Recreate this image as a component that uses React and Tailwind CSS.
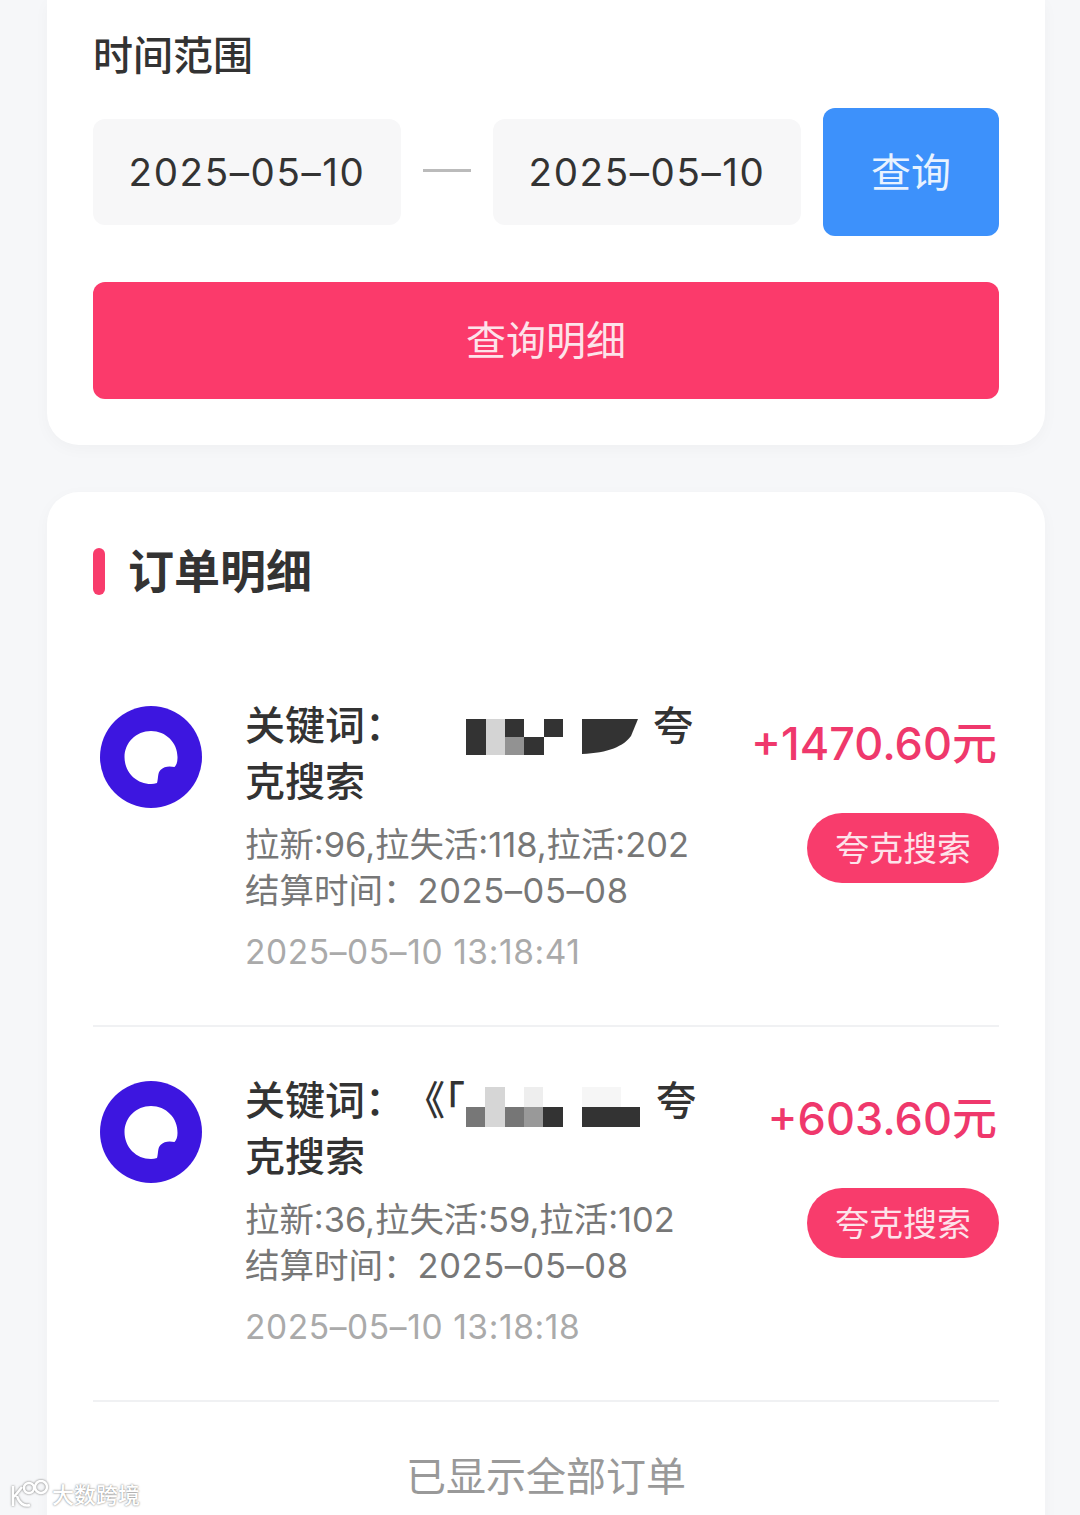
import React from 'react';

const orders = [
  {
    prefix: '',
    gap: 'ml-[61px] mt-[21px]',
    stats: '拉新:96,拉失活:118,拉活:202',
    amount: '+1470.60元',
    time: '2025–05–10 13:18:41',
    mosaic: 'a',
  },
  {
    prefix: '《「',
    gap: '-ml-[19px] mt-[14px]',
    stats: '拉新:36,拉失活:59,拉活:102',
    amount: '+603.60元',
    time: '2025–05–10 13:18:18',
    mosaic: 'b',
  },
];

const QuarkLogo = () => (
  <svg width="102" height="102" viewBox="0 0 102 102" className="shrink-0">
    <circle cx="51" cy="51" r="51" fill="#3d16e0" />
    <path
      d="M51 25C66 25 78 37 77.5 52C77.5 56 76.5 59 74.5 61C70 60 64 60 60.5 64C57.5 67 58.5 72 57 77C55 77.5 53 78 51 78C36 78 24.5 66 24.5 51C24.5 37 36 25 51 25Z"
      fill="#fff"
    />
  </svg>
);

// the blurred out part of the keyword
const MosaicA = () => (
  <svg width="172" height="36" viewBox="0 0 172 36" className="block shrink-0">
    <rect x="0" y="0" width="20" height="36" fill="#333" />
    <rect x="20" y="0" width="19" height="36" fill="#d4d4d4" />
    <rect x="39" y="0" width="19" height="18" fill="#333" />
    <rect x="39" y="18" width="19" height="18" fill="#929292" />
    <rect x="58" y="18" width="20" height="18" fill="#333" />
    <rect x="78" y="0" width="19" height="18" fill="#333" />
    <path d="M116 0H172L165 17C158 27 142 34 116 35Z" fill="#333" />
  </svg>
);

const MosaicB = () => (
  <svg width="175" height="40" viewBox="0 0 175 40" className="block shrink-0">
    <rect x="0" y="20" width="19" height="20" fill="#777" />
    <rect x="19" y="0" width="20" height="40" fill="#d6d6d6" />
    <rect x="39" y="20" width="19" height="20" fill="#767676" />
    <rect x="58" y="0" width="19" height="20" fill="#eeeeee" />
    <rect x="58" y="20" width="19" height="20" fill="#999" />
    <rect x="77" y="20" width="20" height="20" fill="#333" />
    <rect x="116" y="0" width="39" height="20" fill="#f6f6f6" />
    <rect x="116" y="20" width="58" height="20" fill="#333" />
  </svg>
);

const OrderRow = ({ order }) => (
  <div className="flex h-[375px] border-b-2 border-[#f0f1f3] pt-[45px]">
    <div className="ml-[7px] mr-[43px] mt-[9px]">
      <QuarkLogo />
    </div>
    <div className="w-[470px] shrink-0 pt-[1px]">
      <div className="flex h-[56px] items-center text-[40px] font-medium text-[#333]">
        <span className="w-[160px] shrink-0">关键词{'\uFF1A'}</span>
        {order.prefix && <span className="w-[80px] shrink-0">{order.prefix}</span>}
        <span className={`self-start ${order.gap}`}>{order.mosaic === 'a' ? <MosaicA /> : <MosaicB />}</span>
        <span className="ml-[15px]">夸</span>
      </div>
      <div className="h-[56px] text-[40px] font-medium leading-[56px] text-[#333]">克搜索</div>
      <div className="mt-[12px] text-[34.4px] leading-[46px] text-[#777]">{order.stats}</div>
      <div className="text-[34.5px] leading-[46px] text-[#777]">
        结算时间{'\uFF1A'}<span className="tracking-[0.6px]">2025–05–08</span>
      </div>
      <div className="mt-[15px] text-[33.5px] leading-[46px] tracking-[0.6px] text-[#aaa]">{order.time}</div>
    </div>
    <div className="flex flex-1 flex-col items-end">
      <div className="mr-[2px] mt-[19px] whitespace-nowrap text-[45px] font-medium leading-[56px] text-[#ef386c]">
        {order.amount}
      </div>
      <div className="mt-[41px] flex h-[70px] w-[192px] items-center justify-center rounded-full bg-[#f83c6c] text-[34px] text-[#fde3ea]">
        夸克搜索
      </div>
    </div>
  </div>
);

const App = () => {
  return (
    <div className="relative h-[1515px] overflow-hidden bg-[#f6f7f9] pl-[47px] pr-[35px] font-['Inter','Noto_Sans_CJK_SC',sans-serif]">
      <div className="rounded-b-[32px] bg-white px-[46px] pb-[46px] shadow-[0_4px_16px_rgba(0,0,0,0.03)]">
        <div className="pt-[28px] text-[40px] font-medium leading-[56px] text-[#333]">时间范围</div>
        <div className="mt-[24px] flex items-center">
          <div className="flex h-[106px] w-[308px] items-center justify-center rounded-[12px] bg-[#f7f7f8] pt-[2px] text-[38.5px] tracking-[1.6px] text-[#333]">
            2025–05–10
          </div>
          <div className="mx-[22px] h-[3px] w-[48px] -translate-y-[2px] bg-[#bbb]" />
          <div className="flex h-[106px] w-[308px] items-center justify-center rounded-[12px] bg-[#f7f7f8] pt-[2px] text-[38.5px] tracking-[1.6px] text-[#333]">
            2025–05–10
          </div>
          <button className="ml-[22px] flex h-[128px] flex-1 items-center justify-center rounded-[12px] bg-[#3d91fb] pt-[2px] text-[40px] text-[#e8f2ff]">
            查询
          </button>
        </div>
        <button className="mt-[46px] flex h-[117px] w-full items-center justify-center rounded-[12px] bg-[#fb3a6b] text-[40px] text-[#fde3ea]">
          查询明细
        </button>
      </div>

      <div className="mt-[47px] h-[1100px] rounded-t-[32px] bg-white px-[46px] shadow-[0_4px_16px_rgba(0,0,0,0.03)]">
        <div className="flex h-[160px] items-center pb-[1px]">
          <div className="h-[47px] w-[12px] rounded-full bg-[#f83c6c]" />
          <div className="ml-[23px] text-[46px] font-bold text-[#333]">订单明细</div>
        </div>
        <div>
          {orders.map(order => (
            <OrderRow key={order.time} order={order} />
          ))}
        </div>
        <div className="pt-[47px] text-center text-[40px] leading-[56px] text-[#999]">已显示全部订单</div>
      </div>

      {/* watermark */}
      <div className="absolute bottom-[5px] left-[10px] flex items-center">
        <svg width="40" height="30" viewBox="0 0 40 30" fill="none" stroke="#fff" strokeWidth="2.5" className="drop-shadow-[0_0_1px_#777]">
          <path d="M3 6V26M4 17L12 7M7 16C9 23 14 27 20 25" />
          <circle cx="19" cy="8" r="5" />
          <circle cx="31" cy="7" r="6" />
        </svg>
        <span className="ml-[2px] text-[22px] font-medium leading-[30px] text-white [text-shadow:0_0_2px_#666]">大数跨境</span>
      </div>
    </div>
  );
};

export default App;
